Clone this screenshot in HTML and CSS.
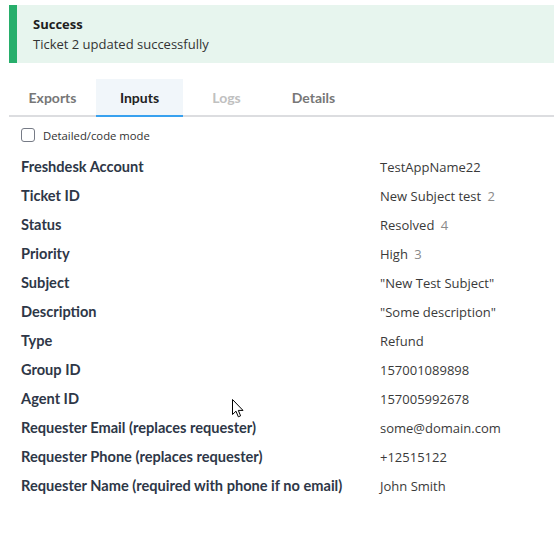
FILE: index.html
```html
<!DOCTYPE html>
<html>
<head>
<meta charset="utf-8">
<link rel="stylesheet" href="styles.css">
</head>
<body>
<div class="page">
  <div class="alert">
    <div class="alert-title">Success</div>
    <div class="alert-text">Ticket 2 updated successfully</div>
  </div>
  <div class="tabs">
    <div class="tab">Exports</div>
    <div class="tab active">Inputs</div>
    <div class="tab disabled">Logs</div>
    <div class="tab">Details</div>
  </div>
  <label class="mode"><span class="box"></span><span class="mode-text">Detailed/code mode</span></label>
  <div class="rows">
    <div class="row"><div class="key">Freshdesk Account</div><div class="val">TestAppName22</div></div>
    <div class="row"><div class="key">Ticket ID</div><div class="val">New Subject test <span class="sub">2</span></div></div>
    <div class="row"><div class="key">Status</div><div class="val">Resolved <span class="sub">4</span></div></div>
    <div class="row"><div class="key">Priority</div><div class="val">High <span class="sub">3</span></div></div>
    <div class="row"><div class="key">Subject</div><div class="val">"New Test Subject"</div></div>
    <div class="row"><div class="key">Description</div><div class="val">"Some description"</div></div>
    <div class="row"><div class="key">Type</div><div class="val">Refund</div></div>
    <div class="row"><div class="key">Group ID</div><div class="val">157001089898</div></div>
    <div class="row"><div class="key">Agent ID</div><div class="val">157005992678</div></div>
    <div class="row"><div class="key">Requester Email (replaces requester)</div><div class="val">some@domain.com</div></div>
    <div class="row"><div class="key">Requester Phone (replaces requester)</div><div class="val">+12515122</div></div>
    <div class="row"><div class="key">Requester Name (required with phone if no email)</div><div class="val">John Smith</div></div>
  </div>
</div>
<svg class="cursor" width="13" height="20" viewBox="0 0 13 20"><path d="M0.5 0.5 L0.5 15.5 L4 12.2 L6.3 17.8 L8.6 16.8 L6.3 11.4 L11 11.4 Z" fill="#fff" stroke="#000" stroke-width="1"/></svg>
</body>
</html>
```
FILE: styles.css
```css
html, body { margin: 0; padding: 0; background: #fff; }
.page { padding: 5px 0 0 9px; font-family: "Open Sans", "Noto Sans", sans-serif; color: #333; }
.alert { background: #e7f5ee; border-left: 8px solid #27ae6b; height: 58px; box-sizing: border-box; padding: 9px 16px; }
.alert-title { font-family: "Open Sans", sans-serif; font-weight: 700; font-size: 13px; color: #1e1e1e; line-height: 20px; }
.alert-text { font-size: 13px; line-height: 21px; color: #333; }
.tabs { display: flex; margin-top: 16px; border-bottom: 2px solid #dcdde0; height: 36px; }
.tab { width: 87px; display: flex; align-items: center; justify-content: center; font-family: Lato, sans-serif; font-weight: 700; font-size: 14px; color: #777; margin-bottom: -2px; border-bottom: 2px solid transparent; padding-top: 1px; }
.tab.active { background: #f1f6fa; color: #222; border-bottom-color: #38a1ef; }
.tab.disabled { color: #c0c0c0; }
.mode { display: flex; align-items: center; margin: 10px 0 0 12px; height: 16px; }
.box { width: 12px; height: 12px; border: 1px solid #767b86; border-radius: 3px; background: #fff; }
.mode-text { margin-left: 8px; font-size: 11.3px; color: #333; }
.rows { margin-top: 9px; }
.row { display: flex; height: 29px; align-items: center; padding-left: 12px; }
.key { width: 359px; flex: none; font-family: Lato, sans-serif; font-weight: 700; font-size: 14.6px; color: #2e3747; }
.val { font-size: 13px; color: #3a3a3a; }
.sub { color: #8a8a8a; margin-left: 3px; }
.cursor { position: absolute; left: 232px; top: 399px; }
```
